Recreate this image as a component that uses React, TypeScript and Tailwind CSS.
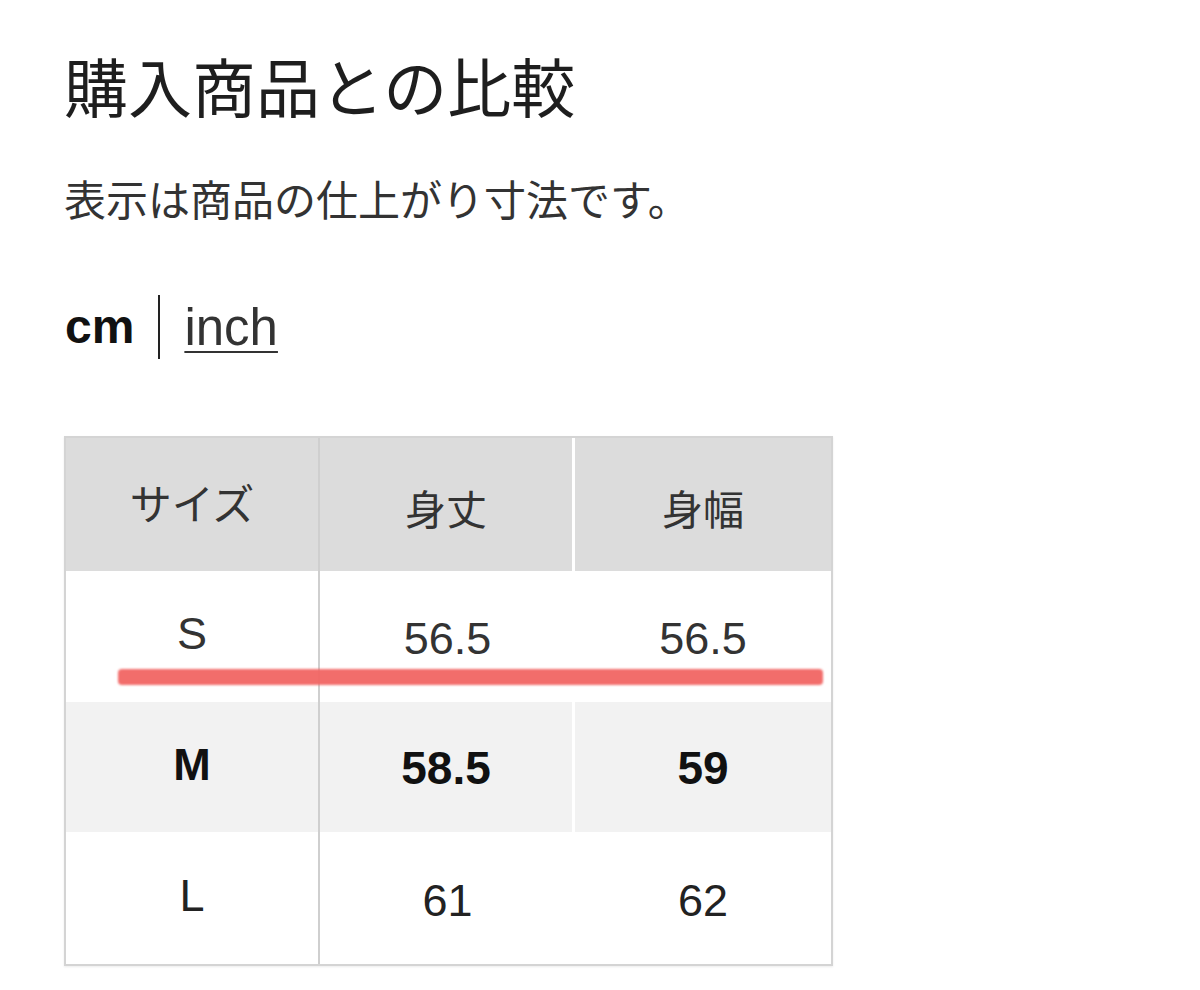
import React from "react";

const jp = { fontFamily: '"Noto Sans CJK JP", "Noto Sans", sans-serif' };
const lat = { fontFamily: '"Liberation Sans", "Noto Sans CJK JP", sans-serif' };

export default function App() {
  return (
    <div className="w-[1200px] h-[990px] bg-white relative overflow-hidden text-[#222]">
      <div className="pl-[64px]">
        <div className="pt-[52px] h-[115px] flex items-start">
          <h1 className="text-[64px] leading-[64px] font-normal text-[#1e1e1e]" style={jp}>
            購入商品との比較
          </h1>
        </div>
        <div className="mt-[62px] h-[42px] flex items-center">
          <p className="text-[42px] leading-[42px] text-[#333]" style={jp}>
            表示は商品の仕上がり寸法です。
          </p>
        </div>
        <div className="mt-[76px] h-[64px] flex items-center" style={lat}>
          <span className="text-[48px] font-bold text-[#111] leading-none ml-[1px]">cm</span>
          <span className="mx-[24px] w-[2px] h-[64px] bg-[#222]"></span>
          <span className="text-[51px] text-[#333] underline underline-offset-[6px] decoration-[2px] leading-none">inch</span>
        </div>

        <div className="mt-[77px] w-[769px] border-2 border-[#d4d4d4] shadow-[0_1px_2px_rgba(0,0,0,0.08)]">
          <div className="grid grid-cols-[254px_255px_256px] h-[133px] bg-[#dcdcdc] text-[#333]" style={jp}>
            <div className="flex items-center justify-center border-r-2 border-[#cfcfcf] text-[42px] pb-[6px]">サイズ</div>
            <div className="flex items-center justify-center border-r-[3px] border-white text-[41px] pt-[6px]">身丈</div>
            <div className="flex items-center justify-center text-[41px] pt-[6px]">身幅</div>
          </div>
          <div className="grid grid-cols-[254px_255px_256px] h-[131px] bg-white text-[#333]" style={lat}>
            <div className="flex items-center justify-center border-r-2 border-[#cfcfcf] text-[45px] pb-[6px]">S</div>
            <div className="flex items-center justify-center text-[45px] pt-[4px]">56.5</div>
            <div className="flex items-center justify-center text-[45px] pt-[4px]">56.5</div>
          </div>
          <div className="grid grid-cols-[254px_255px_256px] h-[130px] bg-[#f2f2f2] text-[#111] font-bold" style={lat}>
            <div className="flex items-center justify-center border-r-2 border-[#cfcfcf] text-[45px] pb-[4px]">M</div>
            <div className="flex items-center justify-center border-r-[3px] border-white text-[46px] pt-[2px]">58.5</div>
            <div className="flex items-center justify-center text-[46px] pt-[2px]">59</div>
          </div>
          <div className="grid grid-cols-[254px_255px_256px] h-[132px] bg-white text-[#222]" style={lat}>
            <div className="flex items-center justify-center border-r-2 border-[#cfcfcf] text-[45px] pb-[4px]">L</div>
            <div className="flex items-center justify-center text-[45px] pt-[6px]">61</div>
            <div className="flex items-center justify-center text-[45px] pt-[6px]">62</div>
          </div>
        </div>
      </div>

      <div className="absolute left-[118px] top-[669px] w-[705px] h-[16px] rounded-[4px] bg-[#f26664] opacity-95 blur-[0.8px]"></div>
    </div>
  );
}
